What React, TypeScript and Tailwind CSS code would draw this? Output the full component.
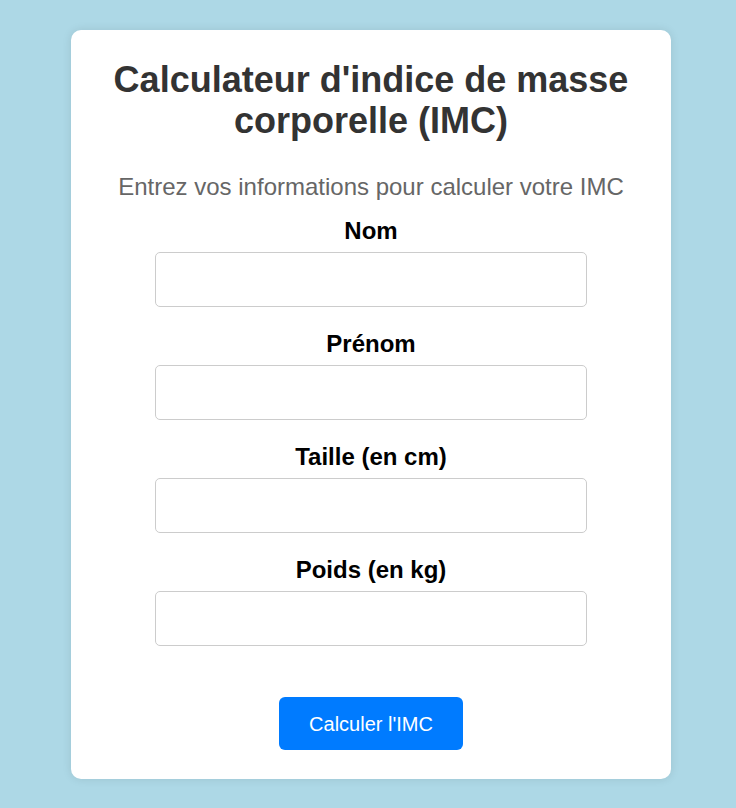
import React from "react";

const fields = ["Nom", "Prénom", "Taille (en cm)", "Poids (en kg)"];

export default function App() {
  return (
    <div className="min-h-screen bg-[#add8e6] flex justify-center pt-[30px] pl-[6px] font-['Liberation_Sans',Arial,sans-serif]">
      <div className="w-[600px] h-fit bg-white rounded-[10px] shadow-[0_0_10px_rgba(0,0,0,0.1)] px-[30px] pt-[29px] pb-[29px] text-center">
        <h1 className="text-[36px] leading-[41px] font-bold text-[#333]">
          Calculateur d'indice de masse corporelle (IMC)
        </h1>
        <p className="mt-[32px] text-[24px] leading-[28px] text-[#666]">
          Entrez vos informations pour calculer votre IMC
        </p>
        <form className="mt-[16px] flex flex-col items-center" onSubmit={(e) => e.preventDefault()}>
          {fields.map((f, i) => (
            <div key={f} className={"w-[432px] flex flex-col items-center " + (i > 0 ? "mt-[23px]" : "")}>
              <label className="text-[24px] leading-[28px] font-bold text-black">{f}</label>
              <input
                type="text"
                className="mt-[7px] w-full h-[55px] border border-[#ccc] rounded-[5px] px-[10px] text-[16px] outline-none"
              />
            </div>
          ))}
          <button
            type="submit"
            className="mt-[51px] w-[184px] h-[53px] bg-[#007bff] text-white text-[20px] rounded-[6px]"
          >
            Calculer l'IMC
          </button>
        </form>
      </div>
    </div>
  );
}
